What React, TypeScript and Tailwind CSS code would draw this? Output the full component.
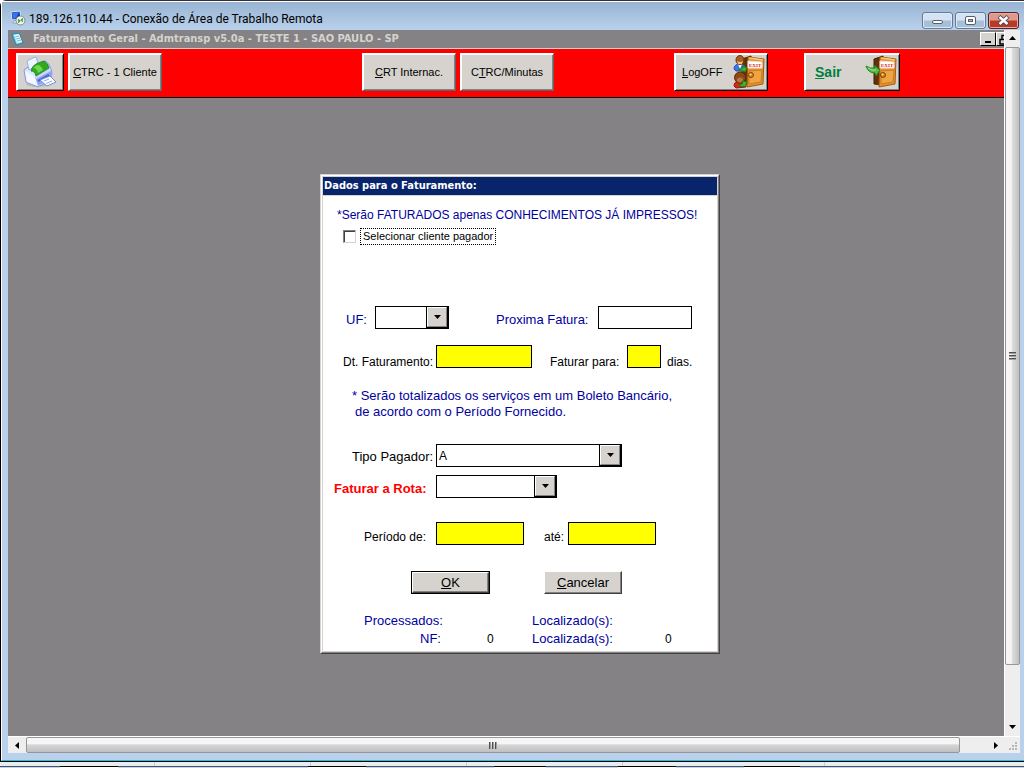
import React from "react";

const bevel = "border border-t-white border-l-white bg-[#d6d3ce] text-black";
const softEdge = `${bevel} border-r-[#636363] border-b-[#636363] shadow-[inset_1px_1px_0_#ffffff,inset_-1px_-1px_0_#848284]`;
const darkEdge = `${bevel} border-r-black border-b-black shadow-[inset_1px_1px_0_#ffffff,inset_-1px_-1px_0_#848284]`;

function PrinterIcon() {
  return (
    <svg width="34" height="32" viewBox="0 0 34 32" aria-hidden="true">
      <ellipse cx="15" cy="28" rx="12" ry="3" fill="#bdbab6" />
      <path d="M1 14 L8 9 L22 5 Q27 7 29 17 L28 24 L15 31 L3 26 Z" fill="#dde6fd" stroke="#7d98e8" />
      <path d="M4 5 L12 1 Q14 1 14 4 L15 9 L6 14 Z" fill="#eef6ff" stroke="#8ab2ec" />
      <path d="M2 15 L11 20 L15 30 L4 26 Z" fill="#f4f7ff" />
      <path d="M12 20 L27 12 L29 18 L28 23 L15 30 Z" fill="#8fa5f0" />
      <path d="M12 20 L27 12 L28 15 L13 23 Z" fill="#c9d6fc" />
      <path d="M8 15 Q9 10 13 8 L21 5 Q25 7 26 12 L13 20 Q12 15 8 15 Z" fill="#2faa1c" stroke="#2c8f34" />
      <path d="M10 12 Q14 12 15 17 L20 14 Q18 9 14 9 Z" fill="#6fd850" />
      <path d="M15 25 L26 19" stroke="#4b66c8" strokeWidth="2" />
      <path d="M17 24 L27 20 L33 26 L24 30 Z" fill="#fbfdff" stroke="#6d8ce4" />
      <path d="M21 25 L26 23 M23 27.5 L29 25" stroke="#8eabee" />
    </svg>
  );
}

function Door() {
  return (
    <g>
      <path d="M1 4 L10 1 L11 30 L1 29 Z" fill="#633008" stroke="#472006" />
      <path d="M7 2 L23 4 L22 29 L6 32 Z" fill="#e2932c" stroke="#a65b10" />
      <path d="M8 16 L21 15 L20 27 L8 29 Z" fill="#eda543" stroke="#cb7a20" />
      <path d="M8 3 L22 5" stroke="#f8cb77" strokeWidth="1.5" />
      <path d="M7 6 L21 7 L21 13 L7 13 Z" fill="#fff" stroke="#eedede" />
      <text x="8" y="12" fill="#e51616" fontSize="5" fontWeight="bold" fontFamily="Liberation Serif, serif">
        EXIT
      </text>
      <circle cx="10" cy="20" r="2.5" fill="#d68120" stroke="#874506" />
      <circle cx="9.5" cy="19.5" r="1" fill="#ffe28f" />
    </g>
  );
}

function LogoffIcon() {
  return (
    <svg width="32" height="34" viewBox="0 0 32 34" aria-hidden="true">
      <g transform="translate(8 0)">
        <Door />
      </g>
      <path d="M1 14 Q1 9 7 9 Q12 9 13 14 L11 16 L3 16 Z" fill="#3f78e6" stroke="#2051b5" />
      <path d="M5 9 L7 14 L9 9" fill="#fff" />
      <ellipse cx="7" cy="5" rx="4" ry="4.5" fill="#a55e20" stroke="#713407" />
      <path d="M4 6 Q7 8 10 6 L9 9 L5 9 Z" fill="#f3bd79" />
      <path d="M1 31 Q1 26 7 26 Q13 26 13 32 L3 33 Z" fill="#dc2418" stroke="#a11009" />
      <ellipse cx="7" cy="22.5" rx="5.5" ry="5.5" fill="#8e4918" stroke="#602c09" />
      <ellipse cx="7" cy="25" rx="3" ry="2.5" fill="#b77a3f" />
      <path d="M5 14 Q8 15 10 13 L9 11 L14 13 L12 17 L11 16 Q8 17 5 14 Z" fill="#43b52f" stroke="#1d8419" />
      <path d="M5 30 Q8 31 10 28 L9 26 L14 27 L12 32 L11 31 Q8 33 5 30 Z" fill="#43b52f" stroke="#1d8419" />
    </svg>
  );
}

function ExitIcon() {
  return (
    <svg width="32" height="34" viewBox="0 0 32 34" aria-hidden="true">
      <g transform="translate(8 0)">
        <Door />
      </g>
      <path d="M1 11 Q5 14 10 13 L9 10 L15 15 L11 21 L10 18 Q3 18 1 11 Z" fill="#55ba49" stroke="#25861f" />
      <path d="M3 13 Q7 16 11 15" fill="none" stroke="#a5e48a" />
    </svg>
  );
}

function Triangle({ direction }: { direction: "up" | "down" | "left" | "right" }) {
  const shapes = {
    up: "M0 5 L3.5 1 L7 5 Z",
    down: "M0 1 L7 1 L3.5 5 Z",
    left: "M5 0 L1 3.5 L5 7 Z",
    right: "M2 0 L6 3.5 L2 7 Z",
  };
  return (
    <svg width="7" height="7" viewBox="0 0 7 7" aria-hidden="true">
      <path d={shapes[direction]} fill="#000" />
    </svg>
  );
}

function TitleBar() {
  const caption =
    "flex h-[17px] w-[31px] items-center justify-center rounded-[3px] border border-[#637b99] bg-linear-to-b from-[#d4e2f1] from-45% to-[#a8bfd8] to-55% shadow-[inset_0_0_0_1px_#dce9f6]";
  return (
    <header className="flex h-[29px] shrink-0 items-center border-t border-white bg-linear-to-b from-[#98b4d2] to-[#b9d1ec] pr-[5px] pl-2">
      <svg width="16" height="16" viewBox="0 0 16 16" className="mt-1 shrink-0" aria-hidden="true">
        <path d="M1 2 L10 1 L11 9 L2 10 Z" fill="#123cb4" stroke="#dce8fb" />
        <path d="M2 3 L9 2 L6 8 L3 9 Z" fill="#3576e8" />
        <path d="M3 11 L7 10 L8 13 L3 13 Z" fill="#e5e8ee" stroke="#69758c" strokeWidth=".5" />
        <circle cx="10.5" cy="10.5" r="4.5" fill="#f0f2ed" stroke="#6f7a6c" strokeWidth=".8" />
        <path d="M8 9.5 L9.7 11 L8 12.5 M13 8.5 L11.3 10 L13 11.5" fill="none" stroke="#2a8d31" strokeWidth="1.2" />
      </svg>
      <h1 className="mt-1.5 ml-[3px] truncate font-['Roboto',sans-serif] text-xs text-black">
        189.126.110.44 - Conexão de Área de Trabalho Remota
      </h1>
      <div className="mt-2 ml-auto flex gap-0.5">
        <button aria-label="Minimizar" className={caption}>
          <span className="mt-1 h-1 w-[11px] rounded-xs border border-[#555f70] bg-white" />
        </button>
        <button aria-label="Maximizar" className={caption}>
          <span className="flex h-[9px] w-[11px] items-center justify-center rounded-xs border border-[#555f70] bg-white">
            <span className="h-[3px] w-[5px] border border-[#555f70] bg-[#a9bfda]" />
          </span>
        </button>
        <button
          aria-label="Fechar"
          className="flex h-[17px] w-[31px] items-center justify-center rounded-[3px] border border-[#58202a] bg-linear-to-b from-[#dc9a8d] from-45% to-[#b83a25] to-55% shadow-[inset_0_0_0_1px_#e5aaa0]"
        >
          <svg width="13" height="11" viewBox="0 0 13 11" aria-hidden="true">
            <path d="M2 1.5 L11 9.5 M11 1.5 L2 9.5" stroke="#514654" strokeWidth="4.2" />
            <path d="M2.5 2 L10.5 9 M10.5 2 L2.5 9" stroke="#fff" strokeWidth="2.4" />
          </svg>
        </button>
      </div>
    </header>
  );
}

function AppTitle() {
  return (
    <div className="flex h-[18px] shrink-0 items-center overflow-hidden bg-[#848284] pl-[3px]">
      <svg width="14" height="14" viewBox="0 0 14 14" className="shrink-0" aria-hidden="true">
        <path d="M1 2 L8 1 L12 11 L5 13 Z" fill="#72cde8" stroke="#208cac" />
        <path d="M3 3 L8 2 L11 10 L6 11 Z" fill="#e9faff" />
        <path d="M4 5 L8 4 M5 7 L9 6 M6 9 L10 8" stroke="#74bad4" />
      </svg>
      <h2 className="ml-2 truncate font-['DejaVu_Sans_Condensed','DejaVu_Sans',sans-serif] text-[11px] font-bold text-[#d6d3ce]">
        Faturamento Geral - Admtransp v5.0a - TESTE 1 - SAO PAULO - SP
      </h2>
      <div className="ml-auto flex w-6 shrink-0 overflow-hidden">
        <button aria-label="Minimizar documento" className="flex h-[14px] w-4 shrink-0 items-end border border-t-white border-l-white border-r-black border-b-black bg-[#d6d3ce] pb-0.5 pl-1">
          <span className="h-0.5 w-1.5 bg-black" />
        </button>
        <button aria-label="Restaurar documento" className="h-[14px] w-4 shrink-0 border border-t-white border-l-white border-r-black border-b-black bg-[#d6d3ce] pl-0.5">
          <svg width="10" height="11" viewBox="0 0 10 11" aria-hidden="true">
            <path d="M3 5 V1.5 H9 V7 H7 M1 5.5 H7 V10 H1 Z" fill="none" stroke="#000" strokeWidth="1.5" />
          </svg>
        </button>
      </div>
    </div>
  );
}

function Toolbar() {
  const tool = "flex h-[38px] shrink-0 items-center font-['Liberation_Sans',sans-serif] text-[11px] whitespace-nowrap";
  return (
    <nav className="flex h-[50px] shrink-0 overflow-hidden border-t border-b border-t-[#d6d3ce] border-b-black bg-[#ff0000] pt-1 pl-2">
      <div className="flex shrink-0 gap-1">
        <button aria-label="Imprimir" className={`${tool} ${darkEdge} w-12 justify-center`}>
          <PrinterIcon />
        </button>
        <button className={`${tool} ${softEdge} w-[94px] justify-center`}>
          <span><u>C</u>TRC - 1 Cliente</span>
        </button>
      </div>
      <div className="ml-[200px] flex shrink-0 gap-1">
        <button className={`${tool} ${softEdge} w-[94px] justify-center`}>
          <span><u>C</u>RT Internac.</span>
        </button>
        <button className={`${tool} ${softEdge} w-[94px] justify-center`}>
          <span>C<u>T</u>RC/Minutas</span>
        </button>
      </div>
      <div className="ml-[120px] flex shrink-0 gap-9">
        <button className={`${tool} ${darkEdge} w-[94px] justify-between pr-0.5 pl-[7px]`}>
          <span><u>L</u>ogOFF</span>
          <LogoffIcon />
        </button>
        <button className={`${tool} ${darkEdge} w-24 justify-between pr-0.5 pl-2.5`}>
          <span className="text-sm font-bold text-[#008040]"><u>S</u>air</span>
          <ExitIcon />
        </button>
      </div>
    </nav>
  );
}

function Field({ id, label, width, yellow }: { id: string; label: string; width: string; yellow?: boolean }) {
  return (
    <input
      id={id}
      aria-label={label}
      className={`h-[23px] shrink-0 border border-black px-0.5 outline-none ${width} ${yellow ? "bg-[#ffff00]" : "bg-white"}`}
    />
  );
}

function Combo({ id, width, options }: { id: string; width: string; options: string[] }) {
  return (
    <div className={`relative h-[23px] shrink-0 ${width}`}>
      <select id={id} className="h-full w-full appearance-none border border-black bg-white pr-6 pl-0.5 text-xs outline-none">
        {options.map((option) => (
          <option key={option}>{option}</option>
        ))}
      </select>
      <span className="pointer-events-none absolute inset-y-0 right-0 flex w-[23px] border border-r-2 border-b-2 border-black">
        <span className="flex flex-1 items-center justify-center border border-t-white border-l-white border-r-[#848284] border-b-[#848284] bg-[#d6d3ce]">
          <Triangle direction="down" />
        </span>
      </span>
    </div>
  );
}

function BillingDialog() {
  const blue = "text-[#0000a0]";
  return (
    <section className="w-[400px] shrink-0 border border-t-[#d6d3ce] border-l-[#d6d3ce] border-r-[#424142] border-b-[#424142]">
      <div className="border border-t-white border-l-white border-r-[#848284] border-b-[#848284]">
        <form
          onSubmit={(event) => event.preventDefault()}
          className="border border-[#d6d3ce] bg-white pb-1 font-['Liberation_Sans',sans-serif] text-[13px] leading-4 whitespace-nowrap text-black"
        >
          <h3 className="h-[19px] border-b border-[#d6d3ce] bg-[#08246b] pl-px font-['DejaVu_Sans_Condensed','DejaVu_Sans',sans-serif] text-[11px] leading-[18px] font-bold text-white">
            Dados para o Faturamento:
          </h3>
          <p className={`mt-[11px] pl-3.5 text-xs leading-4 ${blue}`}>
            *Serão FATURADOS apenas CONHECIMENTOS JÁ IMPRESSOS!
          </p>
          <div className="mt-[5px] flex items-center gap-1 pl-5">
            <input
              id="payer"
              type="checkbox"
              className="size-[13px] appearance-none border border-t-[#848284] border-l-[#848284] border-r-[#d6d3ce] border-b-[#d6d3ce] bg-white shadow-[inset_1px_1px_0_#424142] checked:bg-black"
            />
            <label htmlFor="payer" className="border border-dotted border-black px-0.5 text-[11px] leading-[15px]">
              Selecionar cliente pagador
            </label>
          </div>

          <div className="mt-[61px] flex">
            <label htmlFor="uf" className={`w-[52px] pt-1.5 pl-[23px] ${blue}`}>UF:</label>
            <Combo id="uf" width="w-[74px]" options={[""]} />
            <label htmlFor="next" className={`ml-[47px] w-[102px] pt-1.5 ${blue}`}>Proxima Fatura:</label>
            <Field id="next" label="Proxima Fatura" width="w-[94px]" />
          </div>

          <div className="mt-4 flex">
            <label htmlFor="date" className="w-[113px] pt-[9px] pl-5 text-xs leading-4">Dt. Faturamento:</label>
            <Field id="date" label="Dt. Faturamento" width="w-24" yellow />
            <label htmlFor="days" className="ml-[18px] w-[77px] pt-[9px] text-xs leading-4">Faturar para:</label>
            <Field id="days" label="Faturar para" width="w-[34px]" yellow />
            <span className="ml-1.5 pt-[9px] text-xs leading-4">dias.</span>
          </div>

          <p className={`mt-[18px] pl-[29px] ${blue}`}>
            * Serão totalizados os serviços em um Boleto Bancário,
            <br />
            <span className="pl-[3px]">de acordo com o Período Fornecido.</span>
          </p>

          <div className="mt-6 flex">
            <label htmlFor="type" className="w-[113px] pt-[5px] pl-[29px]">Tipo Pagador:</label>
            <Combo id="type" width="w-[186px]" options={["A"]} />
          </div>
          <div className="mt-2 flex">
            <label htmlFor="route" className="w-[113px] pt-1.5 pl-[11px] font-bold text-[#ff0000]">Faturar a Rota:</label>
            <Combo id="route" width="w-[121px]" options={[""]} />
          </div>

          <div className="mt-6 flex">
            <label htmlFor="from" className="w-[113px] pt-[7px] pl-[41px] text-xs leading-4">Período de:</label>
            <Field id="from" label="Período de" width="w-[88px]" yellow />
            <label htmlFor="to" className="ml-5 w-6 pt-[7px] text-xs leading-4">até:</label>
            <Field id="to" label="Período até" width="w-[88px]" yellow />
          </div>

          <div className="mt-[26px] flex gap-[54px] pl-[88px]">
            <button type="submit" className="h-[23px] w-[79px] border border-black">
              <span className="flex h-full items-center justify-center border border-t-white border-l-white border-r-[#424142] border-b-[#424142] bg-[#d6d3ce] shadow-[inset_-1px_-1px_0_#848284]">
                <span><u>O</u>K</span>
              </span>
            </button>
            <button type="button" className="h-[23px] w-[78px] border border-t-white border-l-white border-r-[#424142] border-b-[#424142] bg-[#d6d3ce] shadow-[inset_-1px_-1px_0_#848284]">
              <u>C</u>ancelar
            </button>
          </div>

          <div className={`mt-[19px] flex ${blue}`}>
            <span className="w-[209px] pl-[41px]">Processados:</span>
            <span>Localizado(s):</span>
          </div>
          <div className={`mt-0.5 flex ${blue}`}>
            <span className="w-[164px] pl-[97px]">NF:</span>
            <output className="w-[45px] text-xs leading-4 text-black">0</output>
            <span className="w-[133px]">Localizada(s):</span>
            <output className="text-xs leading-4 text-black">0</output>
          </div>
        </form>
      </div>
    </section>
  );
}

function SideScrollbar() {
  return (
    <div className="flex w-4 flex-col border-l border-white bg-[#eeeeee]">
      <button aria-label="Rolar para cima" className="flex h-[17px] items-center justify-center">
        <Triangle direction="up" />
      </button>
      <div className="flex flex-1 flex-col items-center justify-center gap-px rounded-xs border border-[#969696] bg-linear-to-r from-[#f5f5f5] from-40% via-[#dcdcdc] via-50% to-[#c0c0c3]">
        <span className="h-0.5 w-[7px] border-t border-[#505050] bg-[#a0a0a0]" />
        <span className="h-0.5 w-[7px] border-t border-[#505050] bg-[#a0a0a0]" />
        <span className="h-0.5 w-[7px] border-t border-[#505050] bg-[#a0a0a0]" />
      </div>
      <div className="h-[54px]" />
      <button aria-label="Rolar para baixo" className="flex h-[17px] items-center justify-center">
        <Triangle direction="down" />
      </button>
    </div>
  );
}

function BottomScrollbar() {
  return (
    <div className="flex h-[17px] shrink-0 border-t border-white bg-[#eeeeee]">
      <button aria-label="Rolar para a esquerda" className="flex w-[18px] items-center justify-center">
        <Triangle direction="left" />
      </button>
      <div className="flex flex-1 items-center justify-center gap-px rounded-xs border border-[#969696] bg-linear-to-b from-[#f5f5f5] from-40% via-[#d5d5d7] via-50% to-[#c0c0c3]">
        <span className="h-[7px] w-0.5 border-l border-[#505050] bg-[#a0a0a0]" />
        <span className="h-[7px] w-0.5 border-l border-[#505050] bg-[#a0a0a0]" />
        <span className="h-[7px] w-0.5 border-l border-[#505050] bg-[#a0a0a0]" />
      </div>
      <div className="w-[27px]" />
      <button aria-label="Rolar para a direita" className="flex w-[17px] items-center justify-center">
        <Triangle direction="right" />
      </button>
      <div className="flex w-4 items-end justify-end p-0.5">
        <svg width="10" height="10" viewBox="0 0 10 10" aria-hidden="true">
          <path d="M7 1h2v2H7z M4 4h2v2H4z M7 4h2v2H7z M1 7h2v2H1z M4 7h2v2H4z M7 7h2v2H7z" fill="#b8b8b8" />
        </svg>
      </div>
    </div>
  );
}

export default function App() {
  return (
    <div className="flex min-h-screen flex-col bg-white pr-1">
      <div className="flex flex-1 flex-col rounded-tl-md border-t border-b border-l border-t-[#332f38] border-b-black border-l-black bg-[#b9d1ec]">
        <div className="flex flex-1 flex-col border-b border-l border-b-[#18c4dc] border-l-white">
          <TitleBar />
          <main className="mr-1 mb-[7px] ml-1.5 flex flex-1 flex-col">
            <div className="flex flex-1">
              <div className="flex min-w-0 flex-1 flex-col bg-[#848284]">
                <AppTitle />
                <Toolbar />
                <div className="flex flex-1 items-start justify-center overflow-hidden pt-[76px] pb-4 pl-7">
                  <BillingDialog />
                </div>
              </div>
              <SideScrollbar />
            </div>
            <BottomScrollbar />
          </main>
        </div>
      </div>
      <footer className="shrink-0">
        <div className="flex h-1 bg-[#ececee]">
          <div className="w-[155px] border-r border-[#cfcfd2]" />
          <div className="w-[156px] border-r border-[#cfcfd2]" />
          <div className="w-[156px] border-r border-[#cfcfd2]" />
          <div className="w-[156px] border-r border-[#cfcfd2]" />
          <div className="w-[202px] border-r border-[#cfcfd2]" />
        </div>
        <div className="flex h-0.5">
          <div className="w-[60px] border-t border-[#435169] bg-[#c4d5e8]" />
          <div className="w-[58px] border-t border-black bg-white" />
          <div className="w-[190px] border-t border-[#435169] bg-[#c4d5e8]" />
          <div className="w-[58px] border-t border-black bg-white" />
          <div className="w-[128px] border-t border-[#435169] bg-[#c4d5e8]" />
          <div className="w-[52px] border-t border-black bg-white" />
          <div className="w-[72px] border-t border-[#435169] bg-[#c4d5e8]" />
          <div className="w-[58px] border-t border-black bg-white" />
          <div className="w-[68px] border-t border-[#435169] bg-[#c4d5e8]" />
          <div className="w-[56px] border-t border-black bg-white" />
          <div className="flex-1 border-t border-[#435169] bg-[#c4d5e8]" />
        </div>
      </footer>
    </div>
  );
}
